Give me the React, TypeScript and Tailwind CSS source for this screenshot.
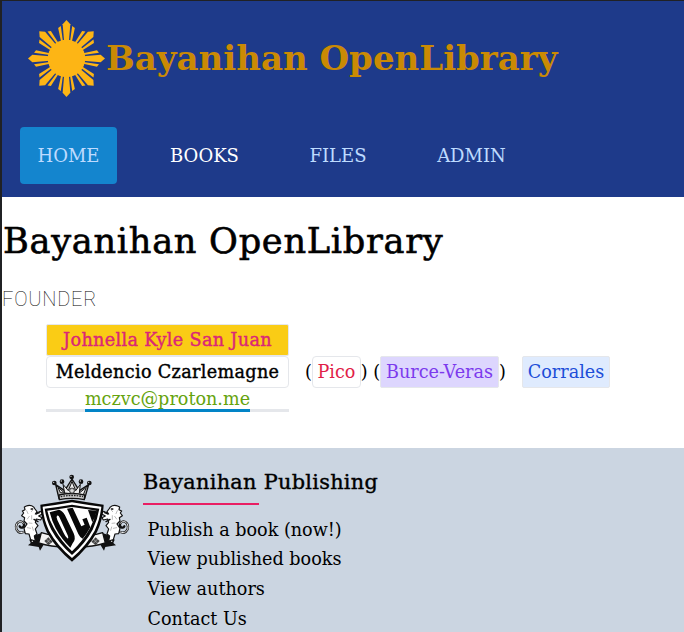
const serif = "font-['DejaVu_Serif',serif]";

// Medium-weight serif: the regular face with a slight outline and wider tracking.
const medium = "tracking-[0.34px] [-webkit-text-stroke:0.4px]";

function Sun() {
  return (
    <svg viewBox="-115 -115 230 230" className="h-[77px] w-[77px] shrink-0" fill="#fdb515">
      <circle r="56" />
      {[0, 45, 90, 135, 180, 225, 270, 315].map((angle) => (
        <g key={angle} transform={`rotate(${angle})`}>
          <path d="M0-115 11.5-102 7-50H-7L-11.5-102Z" />
          <path d="M17-97 25-91 16-50H10.5Z" />
          <path d="M-17-97-25-91-16-50H-10.5Z" />
        </g>
      ))}
    </svg>
  );
}

function Lion() {
  return (
    <g strokeLinejoin="round" strokeLinecap="round">
      <path d="M56 201C43 207 33 198 33 185C34 170 49 164 56 175C61 185 49 193 44 184" fill="none" stroke="#111" strokeWidth="7" />
      <path d="M56 201C43 207 33 198 33 185C34 170 49 164 56 175" fill="none" stroke="#eee" strokeWidth="3" />
      <path
        d="M64 123C75 118 87 123 90 132L96 140L91 147L106 139L113 146L101 153L111 158L107 165L94 162L91 172L99 182L91 192L96 207L88 213L91 228L77 224L72 207L61 206L57 190L66 177L57 168L59 158L50 152L56 144L52 138L60 134L58 126Z"
        fill="#fff"
        stroke="#111"
        strokeWidth="3.5"
      />
      <path d="M76 132L83 136L79 140M65 137L69 146M73 154L67 162M80 152L80 163M72 174L81 175M67 188L77 190M82 186L85 196" fill="none" stroke="#999" strokeWidth="2" />
      <path d="M79 132h4M87 163l12 7M94 147l9 -4" stroke="#111" strokeWidth="4" />
    </g>
  );
}

function Ribbon() {
  return (
    <g strokeLinejoin="round">
      <path d="M91 210L73 224L77 234L69 241L101 246L105 257L116 239L108 205Z" fill="#111" />
      <path d="M109 203Q132 211 157 212L182 246Q139 246 101 234Z" fill="#f4f4f4" stroke="#111" strokeWidth="4" />
      <path d="M130 217L143 230L130 241L118 228Z" fill="#444" />
      <path d="M124 222L137 235M137 222L124 235" stroke="#ddd" strokeWidth="1.5" />
      <path d="M88 220L81 230" stroke="#fff" strokeWidth="4" />
    </g>
  );
}

function Crest() {
  return (
    <svg viewBox="0 0 405 315" className="h-[105px] w-[135px] shrink-0">
      <Ribbon />
      <g transform="matrix(-1 0 0 1 402 0)"><Ribbon /></g>
      <Lion />
      <g transform="matrix(-1 0 0 1 402 0)"><Lion /></g>
      <g stroke="#111" strokeWidth="4" strokeLinejoin="round">
        <path d="M162 101L152 59L179 77L201 42L223 77L251 59L239 101Q201 91 162 101Z" fill="#bbb" />
        <path d="M166 83L159 67L179 84L174 58L190 77L201 49L212 77L226 58L223 84L244 67L235 89Z" fill="#eee" strokeWidth="3" />
        <path d="M162 90Q201 81 239 90L238 104Q201 96 163 104Z" fill="#ccc" />
      </g>
      <path d="M167 95Q201 88 234 95" fill="none" stroke="#222" strokeWidth="4" strokeDasharray="5 3" />
      <circle cx="201" cy="77" r="8" fill="#888" stroke="#222" strokeWidth="2" />
      <path d="M201 71L207 77L201 83L195 77Z" fill="#ddd" />
      {[[148, 54], [171, 50], [200, 36], [228, 50], [253, 54]].map(([x, y]) => (
        <g key={x}>
          <circle cx={x} cy={y} r="7" fill="#111" />
          <circle cx={x - 2} cy={y - 2} r="2" fill="#ddd" />
        </g>
      ))}
      <path d="M106 119Q153 112 201 104Q248 112 296 119Q294 163 276 201Q250 249 201 290Q151 249 125 201Q108 164 106 119Z" fill="#080808" />
      <path d="M113 125Q156 120 201 112Q246 120 289 125Q285 163 269 197Q244 242 201 279Q157 242 132 197Q116 164 113 125Z" fill="#fff" />
      <path d="M119 131Q160 126 201 119Q242 126 283 131Q278 163 263 194Q240 236 201 270Q162 236 139 194Q124 164 119 131Z" fill="#080808" />
      <path d="M127 137Q165 132 201 126Q238 131 274 137Q268 165 255 190Q233 229 201 259Q169 229 147 190Q132 164 127 137Z" fill="#fff" />
      <path d="M134 142L162 134Q173 137 180 151L206 205Q214 223 203 235L196 248Q170 223 152 190Q141 169 134 142Z" fill="#080808" />
      <path d="M156 152Q160 149 164 158L188 211Q192 222 187 220Q180 213 176 204L157 165Q153 155 156 152Z" fill="#fff" />
      <path d="M186 131L203 128L229 184L239 179L232 163L245 158L256 187Q244 209 233 221Q226 219 220 207Z" fill="#080808" />
      <path d="M249 135L275 137L270 157L262 172Z" fill="#080808" />
    </svg>
  );
}

const navItems = [
  { label: "HOME", style: "w-[97px] bg-[#1485ce] text-blue-200" },
  { label: "BOOKS", style: "ml-[35px] w-[105px] text-white" },
  { label: "FILES", style: "ml-[34px] w-[94px] text-blue-200" },
  { label: "ADMIN", style: "ml-[34px] w-[105px] text-blue-200" },
];

const links = ["Publish a book (now!)", "View published books", "View authors", "Contact Us"];

export default function App() {
  return (
    <div className={`h-[632px] w-[684px] overflow-hidden border-l-2 border-t border-[#202124] bg-white text-[17.6px] text-black ${serif}`}>
      <header className="h-[196px] bg-[#1e3a8a]">
        <div className="flex h-[126px] items-start pl-[26px] pt-[19px]">
          <Sun />
          <h1 className="mt-[18px] ml-px whitespace-nowrap text-[34px] leading-10 font-bold text-[#ca8a04]">Bayanihan OpenLibrary</h1>
        </div>
        <nav className="flex pl-[18px] text-lg">
          {navItems.map((item) => (
            <a key={item.label} className={`flex h-[57px] items-center justify-center rounded ${item.style}`}>{item.label}</a>
          ))}
        </nav>
      </header>

      <main className="h-[251px] pt-6">
        <h2 className="whitespace-nowrap pl-px text-[35.2px] leading-10 tracking-[0.7px] [-webkit-text-stroke:0.6px]">Bayanihan OpenLibrary</h2>
        <p className="mt-6 font-['Roboto',sans-serif] text-xl leading-7 font-thin tracking-[0.75px]">FOUNDER</p>
        <div className="ml-[44px] mt-[11px] flex">
          <div className="w-[243px] text-center">
            <div className={`h-8 rounded-xs border border-gray-200 bg-[#facc15] leading-[30px] text-[#db2777] ${medium}`}>Johnella Kyle San Juan</div>
            <div className={`h-8 rounded border border-gray-200 leading-[30px] ${medium}`}>Meldencio Czarlemagne</div>
            <div className="flex h-6 justify-center border-b-[3px] border-gray-200">
              <a className="h-6 border-b-[3px] border-[#0284c7] leading-[22px] text-[#65a30d]">mczvc@proton.me</a>
            </div>
          </div>
          <div className="ml-4 mt-8 flex h-8 items-center whitespace-nowrap">
            <span className="w-[7px]">(</span>
            <span className="h-8 w-[49px] rounded border border-gray-200 text-center leading-[30px] text-[#e11d48]">Pico</span>
            <span className="flex w-[19px] justify-center">) (</span>
            <span className="h-8 w-[119px] rounded-xs border border-gray-200 bg-[#ddd6fe] text-center leading-[30px] text-[#7c3aed]">Burce-Veras</span>
            <span className="w-[7px]">)</span>
            <span className="ml-4 h-8 w-[88px] rounded-xs border border-gray-200 bg-[#dfebfe] text-center leading-[30px] text-[#1d4ed8]">Corrales</span>
          </div>
        </div>
      </main>

      <footer className="flex h-[184px] bg-[#cbd5e1] pl-[3px] pt-[17px]">
        <Crest />
        <div className="ml-[3px]">
          <h3 className="whitespace-nowrap text-[20.8px] leading-[34px] tracking-[0.3px] [-webkit-text-stroke:0.4px]">Bayanihan Publishing</h3>
          <div className="mt-1 h-0.5 w-[116px] bg-[#e91e63]" />
          <ul className="ml-[4.5px] mt-[10.6px]">
            {links.map((link) => (
              <li key={link} className="h-[29.7px] leading-[29.7px]">{link}</li>
            ))}
          </ul>
        </div>
      </footer>
    </div>
  );
}
